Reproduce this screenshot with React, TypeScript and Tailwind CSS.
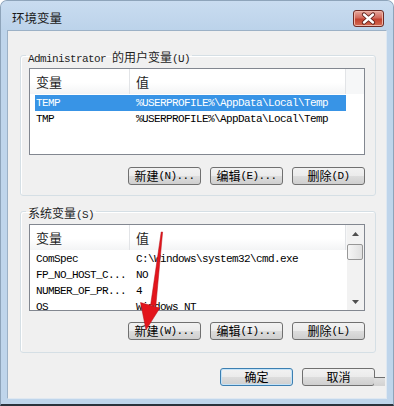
import React from "react";
import clsx from "clsx";

const mono = "font-['Liberation_Mono','Noto_Sans_CJK_SC',monospace] text-[11px] tracking-[-0.6px]";

const L = ({ children }: { children: React.ReactNode }) => <span className={mono}>{children}</span>;
const C = ({ children }: { children: React.ReactNode }) => (
  <span className="font-['Noto_Sans_CJK_SC',sans-serif] text-[12px]">{children}</span>
);

const Button = ({ children, primary = false }: { children: React.ReactNode; primary?: boolean }) => (
  <div
    className={clsx(
      "flex h-[18px] w-[73px] items-center justify-center rounded-[3px] border leading-none text-black",
      "bg-[linear-gradient(#f2f2f2,#ebebeb_50%,#dddddd_50%,#cfcfcf)]",
      primary ? "border-[#3c7fb1] shadow-[inset_0_0_0_1px_#c4e3f8]" : "border-[#707070]"
    )}
  >
    {children}
  </div>
);

const Tri = ({ down = false }: { down?: boolean }) => (
  <svg width="7" height="4" viewBox="0 0 7 4">
    <path d={down ? "M0 0h7L3.5 4z" : "M0 4h7L3.5 0z"} fill="#4f4f4f" />
  </svg>
);

const ScrollBar = () => (
  <div className="flex w-[17px] shrink-0 flex-col items-start bg-[#f2f2f2]">
    <div className="flex h-[17px] w-full items-center justify-center">
      <Tri />
    </div>
    <div className="mt-[2px] h-[16px] w-[16px] rounded-[2px] border border-[#979797] bg-[linear-gradient(90deg,#f6f6f6,#e0e0e0)]" />
    <div className="flex-1" />
    <div className="flex h-[17px] w-full items-center justify-center">
      <Tri down />
    </div>
  </div>
);

type Row = [string, string];

const ListView = ({ rows, selected, scroll = false }: { rows: Row[]; selected?: number; scroll?: boolean }) => (
  <div className="ml-[8px] flex h-[87px] w-[336px] overflow-hidden border border-[#828790] bg-white">
    <div className="flex min-w-0 flex-1 flex-col">
      <div className="flex h-[25px] shrink-0 bg-[linear-gradient(#ffffff_55%,#f3f4f5)] text-[13px] leading-none text-[#1e1e1e]">
        <div className="flex w-[100px] items-center border-r border-[#e2e4e7] pl-[6px]">变量</div>
        <div className="flex w-[216px] items-center border-r border-[#e2e4e7] pl-[6px]">值</div>
        <div className="flex-1 bg-[#f6f7f8]" />
      </div>
      <div className="pt-[1px]">
        {rows.map(([name, value], i) => (
          <div
            key={name}
            className={clsx(
              "ml-[5px] flex h-[16px] w-[311px] items-center leading-none",
              mono,
              i === selected ? "bg-[#3894e6] text-white" : "text-black"
            )}
          >
            <span className="w-[95px] shrink-0 pl-[1px]">{name}</span>
            <span className="whitespace-nowrap pl-[6px]">{value}</span>
          </div>
        ))}
      </div>
    </div>
    {scroll && <ScrollBar />}
  </div>
);

const Group = ({
  legend,
  rows,
  selected,
  scroll,
  keys,
  className,
  buttonsTop,
  bottomPad,
}: {
  legend: React.ReactNode;
  rows: Row[];
  selected?: number;
  scroll?: boolean;
  keys: [string, string, string];
  className?: string;
  buttonsTop: string;
  bottomPad: string;
}) => (
  <fieldset
    className={clsx(
      "ml-[12px] mr-[10px] rounded-[3px] border border-[#d5dfe5] shadow-[inset_1px_1px_0_#ffffff]",
      bottomPad,
      className
    )}
  >
    <legend className="ml-[5px] h-[14px] px-[2px] leading-[14px] text-[#1e1e1e]">{legend}</legend>
    <div className="mt-[6px]">
      <ListView rows={rows} selected={selected} scroll={scroll} />
    </div>
    <div className={clsx("ml-[8px] flex w-[336px] justify-end gap-[9px]", buttonsTop)}>
      <Button>
        <C>新建</C>
        <L>({keys[0]})...</L>
      </Button>
      <Button>
        <C>编辑</C>
        <L>({keys[1]})...</L>
      </Button>
      <Button>
        <C>删除</C>
        <L>({keys[2]})</L>
      </Button>
    </div>
  </fieldset>
);

const userRows: Row[] = [
  ["TEMP", "%USERPROFILE%\\AppData\\Local\\Temp"],
  ["TMP", "%USERPROFILE%\\AppData\\Local\\Temp"],
];

const systemRows: Row[] = [
  ["ComSpec", "C:\\Windows\\system32\\cmd.exe"],
  ["FP_NO_HOST_C...", "NO"],
  ["NUMBER_OF_PR...", "4"],
  ["OS", "Windows_NT"],
];

export default function App() {
  return (
    <div className="relative flex h-[406px] w-[394px] flex-col overflow-hidden rounded-t-[7px] border-x border-t border-b-2 border-x-[#8ea4ba] border-t-[#8ea4ba] border-b-[#2a333c] bg-[#bfd5eb] font-['Noto_Sans_CJK_SC',sans-serif] text-[#1e1e1e]">
      {/* title bar */}
      <div className="flex h-[29px] shrink-0 items-start justify-between bg-[linear-gradient(#c9dcf0,#bcd3ea)] pl-[11px] pr-[9px]">
        <span className="mt-[10px] text-[12.5px] leading-[14px] text-[#1a1a1a]">环境变量</span>
        <div className="mt-[9px] h-[17px] w-[31px] rounded-[3px] border border-[#6e2b25] bg-[linear-gradient(#e6a99f,#d26a5c_45%,#c2412f_55%,#d36b52)] shadow-[inset_0_0_0_1px_#efb5a8]">
          <svg width="29" height="15" viewBox="0 0 29 15">
            <path d="M10 3.5l9 8M19 3.5l-9 8" stroke="#5b1d17" strokeWidth="4.2" strokeLinecap="round" />
            <path d="M10 3.5l9 8M19 3.5l-9 8" stroke="#ffffff" strokeWidth="2.4" strokeLinecap="round" />
          </svg>
        </div>
      </div>

      {/* dialog body */}
      <div className="mx-[6px] flex h-[369px] shrink-0 flex-col border border-[#9cb1c6] border-b-[#dfe8f1] border-r-[#dfe8f1] bg-[#f0f0f0]">
        <Group
          className="mt-[17px]"
          legend={
            <>
              <L>Administrator </L>
              <C>的用户变量</C>
              <L>(U)</L>
            </>
          }
          rows={userRows}
          selected={0}
          keys={["N", "E", "D"]}
          buttonsTop="mt-[12px]"
          bottomPad="pb-[10px]"
        />
        <Group
          className="mt-[8px]"
          legend={
            <>
              <C>系统变量</C>
              <L>(S)</L>
            </>
          }
          rows={systemRows}
          scroll
          keys={["W", "I", "L"]}
          buttonsTop="mt-[11px]"
          bottomPad="pb-[12px]"
        />
        <div className="mt-[15px] flex justify-end gap-[9px] pr-[11px]">
          <Button primary>
            <C>确定</C>
          </Button>
          <Button>
            <C>取消</C>
          </Button>
        </div>
      </div>

      {/* clipped corner of the cancel button */}
      <div className="absolute left-[373px] top-[376px] h-[9px] w-[11px] border-t border-[#707070] bg-[linear-gradient(#e0e0e0,#d2d2d2)]" />

      {/* red annotation arrow */}
      <svg className="pointer-events-none absolute left-[-1px] top-[-1px]" width="394" height="406" viewBox="0 0 394 406">
        <path d="M161.2 232L162.6 232L155.8 306L150.6 305Z" fill="#e3151c" stroke="#b20f14" strokeWidth="0.5" />
        <path d="M140.5 302.5L159.8 308L146 330Z" fill="#e3151c" stroke="#b20f14" strokeWidth="0.5" />
      </svg>
    </div>
  );
}
